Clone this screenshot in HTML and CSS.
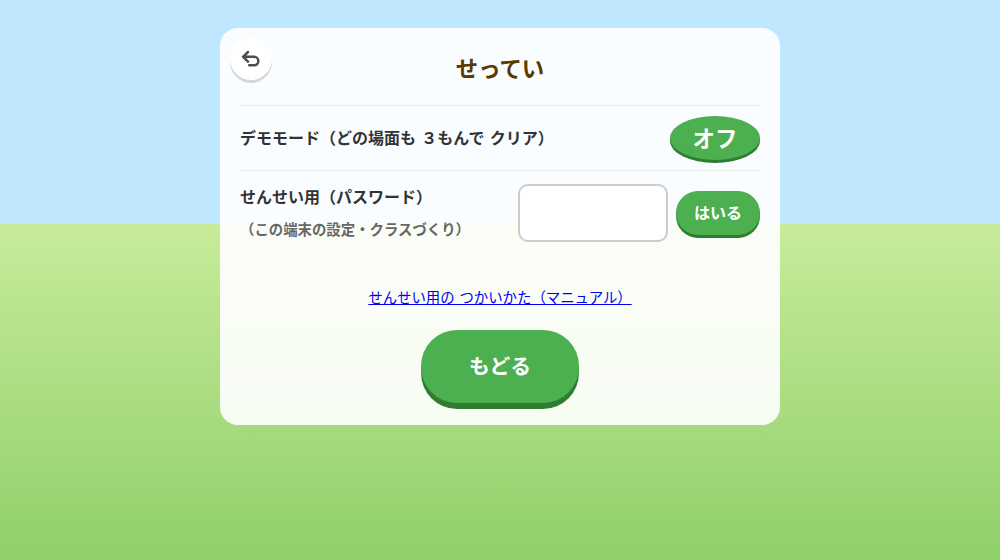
FILE: index.html
```html
<!DOCTYPE html>
<html lang="ja">
<head>
<meta charset="utf-8">
<title>せってい</title>
<link rel="stylesheet" href="styles.css">
</head>
<body>
<main class="card">
  <button class="back" aria-label="もどる"><svg class="back-icon" viewBox="0 0 20 20"><path d="M7 3 2.1 7.8l4.9 4.8M2.5 7.8h10.6a4.2 4.2 0 0 1 0 8.5H8.2"/></svg></button>
  <h1 class="title">せってい</h1>
  <section class="row">
    <div class="label">デモモード（どの場面も ３もんで クリア）</div>
    <button class="btn toggle">オフ</button>
  </section>
  <section class="row login">
    <div class="label">せんせい用（パスワード）<small class="note">（この端末の設定・クラスづくり）</small></div>
    <div class="entry"><input class="password" type="password"><button class="btn enter">はいる</button></div>
  </section>
  <p class="manual"><a class="link" href="#">せんせい用の つかいかた（マニュアル）</a></p>
  <button class="btn return">もどる</button>
</main>
</body>
</html>
```
FILE: styles.css
```css
* { box-sizing: border-box; }
body {
  margin: 0;
  height: 560px;
  padding-top: 28px;
  overflow: hidden;
  font-family: "Noto Sans CJK JP", sans-serif;
  color: #333;
  background: linear-gradient(#bfe8ff 0, #bfe8ff 40%, #c8eb9a 40%, #8fd069 100%);
}
button { border: 0; padding: 0; font-family: inherit; }
.card {
  position: relative;
  display: flex;
  flex-direction: column;
  align-items: center;
  width: 560px;
  height: 397px;
  margin: 0 auto;
  padding: 0 20px;
  border-radius: 18px;
  background: rgba(255, 255, 255, .91);
}
.back {
  position: absolute;
  left: 10px;
  top: 10px;
  display: flex;
  align-items: center;
  justify-content: center;
  width: 42px;
  height: 42px;
  border-radius: 50%;
  background: #fff;
  box-shadow: 0 3px 0 rgba(0, 0, 0, .15);
}
.back-icon {
  width: 20px;
  height: 20px;
  fill: none;
  stroke: #4d4d4d;
  stroke-width: 2.5;
  stroke-linecap: round;
  stroke-linejoin: round;
}
.title {
  height: 77px;
  margin: 0;
  line-height: 79px;
  font-size: 22.4px;
  font-weight: 700;
  color: #5a3a00;
}
.row {
  display: flex;
  align-items: center;
  justify-content: space-between;
  width: 100%;
  height: 65px;
  border-top: 1px solid #e9ecee;
}
.label {
  padding-bottom: 2px;
  line-height: 32px;
  font-size: 16px;
  font-weight: 700;
  white-space: nowrap;
  word-spacing: 1.6px;
}
.note {
  display: block;
  line-height: 34px;
  font-size: 14.4px;
  color: #666;
}
.login { height: 84px; }
.login .label { padding-bottom: 0; }
.entry {
  display: flex;
  align-items: center;
  gap: 8px;
}
.password {
  width: 150px;
  height: 58px;
  border: 2px solid #ccc;
  border-radius: 10px;
  background: #fff;
}
.btn {
  padding-bottom: 2px;
  color: #fff;
  font-weight: 700;
  background: #4caf50;
  box-shadow: 0 3px 0 #2e7d32;
}
.toggle {
  width: 90px;
  height: 44px;
  border-radius: 50%;
  font-size: 22.4px;
}
.enter {
  width: 84px;
  height: 44px;
  padding-bottom: 2px;
  border-radius: 22px;
  font-size: 16px;
}
.manual {
  margin: 29px 0 20px;
  line-height: 27px;
  font-size: 14.4px;
  word-spacing: 1.6px;
}
.link {
  color: #0000ee;
  text-underline-offset: 1px;
}
.return {
  width: 158px;
  height: 73px;
  padding-bottom: 3px;
  border-radius: 36px;
  font-size: 20.8px;
  box-shadow: 0 6px 0 #2e7d32;
}
```
